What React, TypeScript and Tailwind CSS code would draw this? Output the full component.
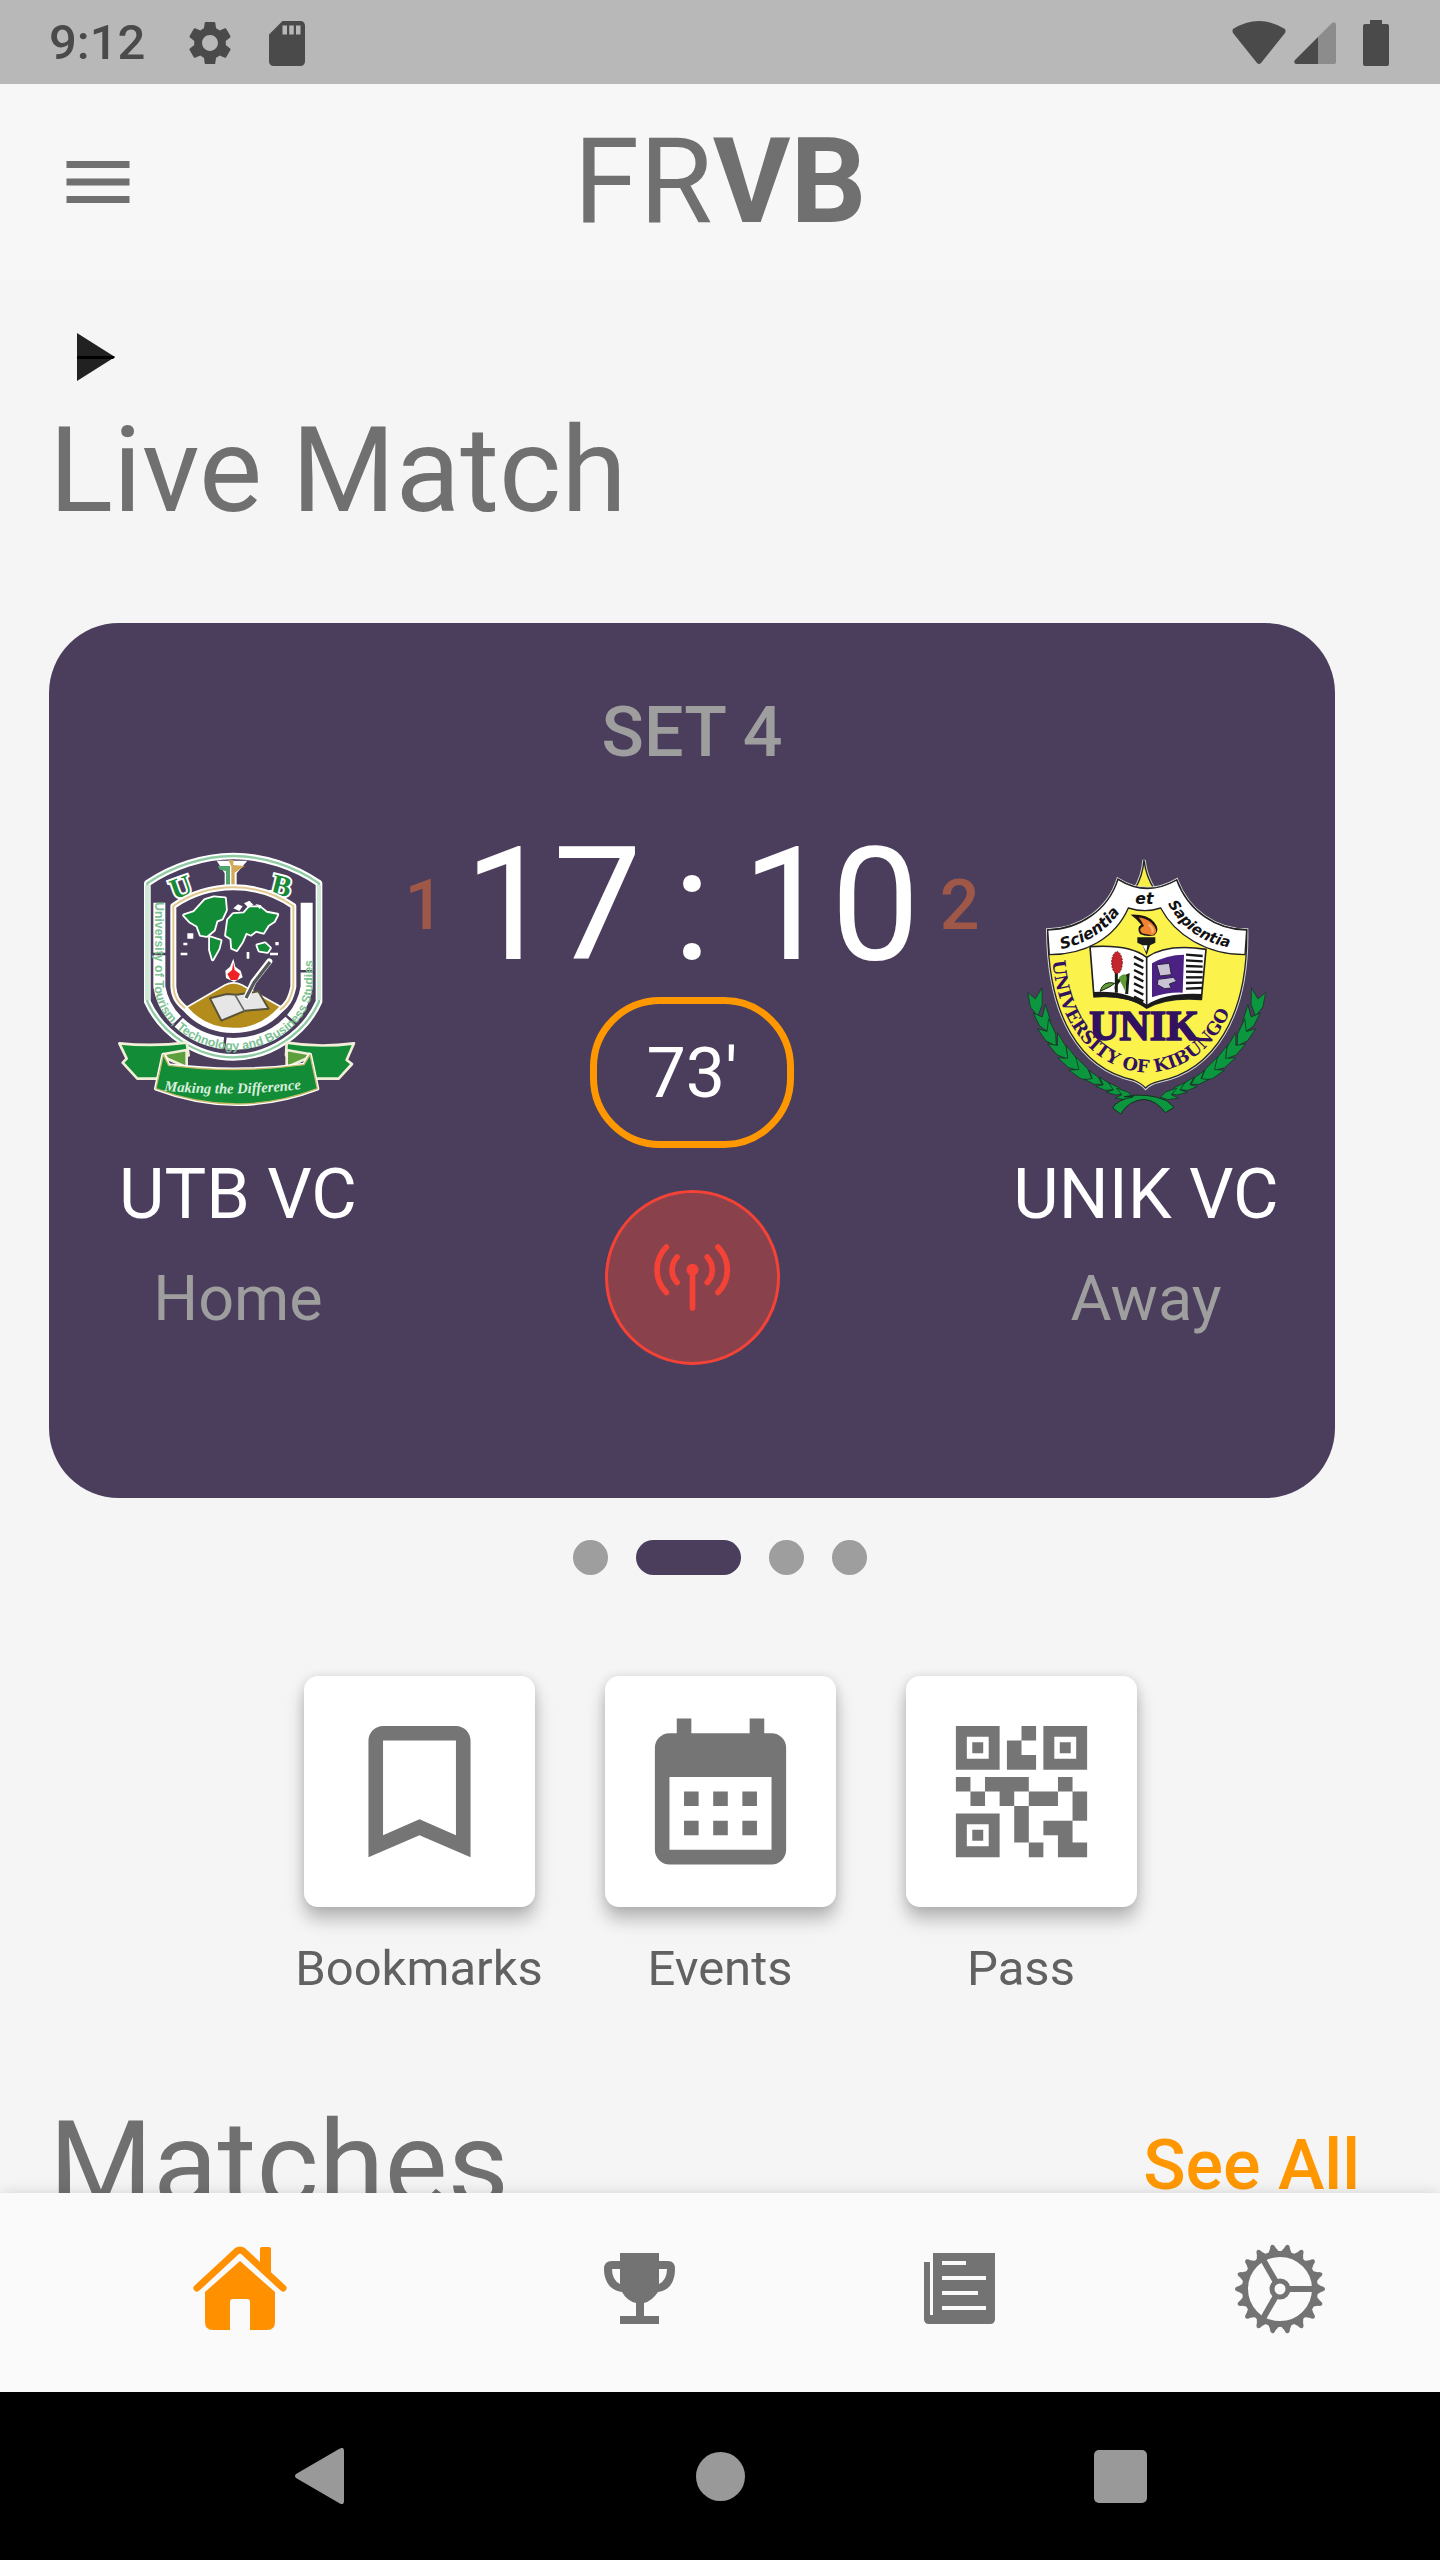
import type { ReactNode } from "react";

function UtbCrest() {
  return (
    <svg viewBox="24 69 840 840" className="size-[280px]" role="img" aria-label="UTB crest">
      <defs>
        <path id="utb-motto" d="M222 812 Q436 832 662 804" />
        <path id="utb-ring" d="M194 246 V500 C198 610 320 688 432 690 C545 688 664 608 668 500 V240" />
      </defs>
      <g fill="none" strokeLinejoin="round">
        <path d="M172 190 C245 140 340 108 430 108 C520 108 615 140 687 190 V545 C645 640 540 712 430 712 C320 712 215 640 172 545 Z" stroke="#ffffff" strokeWidth="20" />
        <path d="M172 190 C245 140 340 108 430 108 C520 108 615 140 687 190 V545 C645 640 540 712 430 712 C320 712 215 640 172 545 Z" stroke="#8fcca4" strokeWidth="7" />
        <path d="M172 195 V540" stroke="#cfe8d8" strokeWidth="14" />
        <path d="M687 195 V540" stroke="#cfe8d8" strokeWidth="12" />
        <path d="M208 248 V500 C225 600 320 670 432 672 C545 670 634 600 650 500 V248" stroke="#ffffff" strokeWidth="36" strokeDasharray="150 8 210 8" />
      </g>
      <text fontFamily="Liberation Sans, sans-serif" fontSize="37" fontWeight="700" fill="#7cc293">
        <textPath href="#utb-ring">University of Tourism, Technology and Business Studies</textPath>
      </text>
      <g fontFamily="Liberation Serif, serif" fontWeight="700" fill="#168a36" stroke="#ffffff" strokeWidth="12" paintOrder="stroke">
        <text x="240" y="232" fontSize="88" transform="rotate(-20 270 200)">U</text>
        <text x="546" y="228" fontSize="88" transform="rotate(14 578 195)">B</text>
      </g>
      <path d="M380 122 H472 L440 160 V200 H404 V160 Z" fill="#ffffff" />
      <path d="M384 138 H420 V195 H408 V154 L388 148 Z" fill="#4ca56c" />
      <path d="M415 120 H430 V135 L464 138 L434 158 V196 H424 V140 Z" fill="#d3a958" />
      <path d="M250 258 C305 220 365 202 430 202 C495 202 555 220 610 258 V500 C602 540 590 555 570 570 C530 615 480 630 430 630 C375 630 325 610 285 565 C262 545 252 530 250 500 Z" fill="none" stroke="#ffffff" strokeWidth="18" strokeLinejoin="round" />
      <path d="M250 258 C305 220 365 202 430 202 C495 202 555 220 610 258 V500 C602 540 590 555 570 570" fill="none" stroke="#e2c88f" strokeWidth="6" />
      <path d="M250 258 V500 C252 530 262 545 285 565" fill="none" stroke="#e2c88f" strokeWidth="6" />
      <g fill="#128c37" stroke="#ffffff" strokeWidth="11" paintOrder="stroke" strokeLinejoin="round">
        <path d="M282 286 L312 276 L345 240 L372 232 L405 235 L408 270 L396 296 L380 302 L372 330 L350 348 L332 345 L322 318 L300 305 Z" />
        <path d="M360 352 L392 362 L386 386 L368 418 L360 390 Z" />
        <path d="M414 300 L430 282 L462 280 L478 262 L510 262 L530 278 L562 284 L552 304 L534 316 L520 338 L498 332 L482 344 L468 338 L456 366 L440 390 L426 384 L424 356 L408 346 Z" />
        <path d="M502 376 L525 370 L540 384 L532 396 L508 392 Z" />
      </g>
      <g fill="#ffffff">
        <path d="M430 265 l14 -12 14 6 -10 14z M462 250 l16 -8 12 12 -14 10z M496 252 l18 4 -4 12z" />
        <path d="M292 340 h18 v16 h-18z M280 368 h12 v8 h-12z M272 398 h20 v8 h-20z M540 398 h24 v8 h-24z M470 396 h8 v20 h-8z M556 366 h10 v10 h-10z" />
      </g>
      <path d="M290 562 L405 495 Q430 482 456 495 L572 560 Q510 628 430 626 Q345 626 290 562 Z" fill="#b48c1c" stroke="#ffffff" strokeWidth="5" />
      <path d="M430 416 L436 440 L452 452 L458 472 L432 486 L408 474 L406 452 L420 440 Z" fill="#ffffff" />
      <path d="M430 428 L434 450 L450 462 L442 480 L422 480 L412 462 L426 450 Z" fill="#ee2424" />
      <path d="M360 535 L410 522 L440 524 L505 514 L536 566 L466 572 L394 602 Z" fill="#e6e6e6" stroke="#585339" strokeWidth="6" strokeLinejoin="round" />
      <path d="M436 526 L464 574" stroke="#666" strokeWidth="5" />
      <path d="M470 530 L490 486 L538 424" fill="none" stroke="#ffffff" strokeWidth="18" strokeLinecap="round" />
      <path d="M468 534 L492 488 L540 426" fill="none" stroke="#55595a" strokeWidth="10" />
      <g strokeLinejoin="round">
        <path d="M88 670 Q190 680 290 668 L296 706 L230 708 L204 776 L142 776 L98 728 L110 716 Z" fill="#128c37" stroke="#f2efd8" strokeWidth="8" />
        <path d="M792 670 Q690 684 590 668 L588 706 L650 708 L676 776 L746 776 L786 732 L770 720 Z" fill="#128c37" stroke="#f2efd8" strokeWidth="8" />
        <path d="M222 702 L290 690 V742 L232 716 Z" fill="#5c9f3c" stroke="#f2efd8" strokeWidth="8" />
        <path d="M658 702 L590 690 V742 L648 716 Z" fill="#5c9f3c" stroke="#f2efd8" strokeWidth="8" />
        <path d="M220 704 L236 736 Q440 762 642 734 L660 704 L682 806 Q440 898 198 806 Z" fill="#128c37" stroke="#ffffff" strokeWidth="12" />
        <path d="M220 704 L236 736 Q440 762 642 734 L660 704 L682 806 Q440 898 198 806 Z" fill="#128c37" stroke="#c9b869" strokeWidth="4" />
      </g>
      <text fontFamily="Liberation Serif, serif" fontSize="44" fontWeight="700" fontStyle="italic" fill="#d9efdf">
        <textPath href="#utb-motto">Making the Difference</textPath>
      </text>
    </svg>
  );
}

const leaves = [
  [112, 520, 82], [136, 572, 66], [152, 614, 58], [184, 655, 52], [216, 692, 45],
  [250, 724, 38], [285, 748, 30], [318, 766, 25], [348, 780, 18], [374, 794, 12],
];

function Laurel() {
  return (
    <g fill="#0c9640" stroke="#12301c" strokeWidth="2">
      {leaves.map(([x, y, a], i) => (
        <path
          key={i}
          d={i < 6 ? "M38 4 L8 22 L-36 24 L-14 4 L-44 -20 L6 -14 Z" : "M26 2 L6 14 L-26 16 L-8 2 L-28 -14 L6 -10 Z"}
          transform={`translate(${x} ${y}) rotate(${a})`}
        />
      ))}
    </g>
  );
}

function UnikCrest() {
  const lines = [0, 1, 2, 3, 4, 5, 6];
  return (
    <svg viewBox="18 39 840 840" className="size-[280px]" role="img" aria-label="UNIK crest">
      <defs>
        <path id="unik-left" d="M184 357 C270 340 342 290 384 206" />
        <path id="unik-right" d="M504 220 C541 295 612 345 712 356" />
        <path id="unik-name" d="M158 392 C172 600 300 722 440 728 C590 722 712 600 728 380" />
      </defs>
      <Laurel />
      <g transform="translate(880 0) scale(-1 1)">
        <Laurel />
      </g>
      <path d="M372 800 Q440 786 500 812 L522 832 L496 848 Q470 812 432 808 Q385 812 362 852 L338 834 Q350 810 400 800 Z" fill="#0c9640" stroke="#12301c" strokeWidth="3" />
      <path d="M432 90 Q438 140 462 176 H405 Q428 140 432 90 Z" fill="#f8ee48" stroke="#cfcfcf" strokeWidth="10" />
      <path d="M432 90 Q438 140 462 176 H405 Q428 140 432 90 Z" fill="#f8ee48" stroke="#222" strokeWidth="4" />
      <path d="M354 148 Q440 202 530 150 C565 245 650 300 740 300 C745 560 640 722 476 754 Q450 760 437 774 Q424 760 400 750 C240 715 145 560 143 300 C240 298 325 240 354 148 Z" fill="#fbf24c" stroke="#d5d5d5" strokeWidth="10" />
      <path d="M354 148 Q440 202 530 150 C565 245 650 300 740 300 C745 560 640 722 476 754 Q450 760 437 774 Q424 760 400 750 C240 715 145 560 143 300 C240 298 325 240 354 148 Z" fill="#fbf24c" stroke="#26262a" strokeWidth="4" />
      <path d="M354 148 Q440 202 530 150 C565 245 650 300 740 300 L735 374 C620 374 525 315 482 234 Q435 250 385 234 C345 325 255 374 148 374 L143 300 C240 298 325 240 354 148 Z" fill="#ffffff" stroke="#222" strokeWidth="4" />
      <g fontFamily="DejaVu Sans, sans-serif" fontStyle="italic" fontWeight="700" fontSize="47" fill="#111">
        <text><textPath href="#unik-left">Scientia</textPath></text>
        <text x="406" y="222">et</text>
        <text fontSize="44"><textPath href="#unik-right">Sapientia</textPath></text>
      </g>
      <path d="M270 350 Q390 342 440 382 Q500 340 618 358 L604 508 Q500 500 440 534 Q380 490 282 500 Z" fill="#ffffff" stroke="#222" strokeWidth="5" />
      <path d="M280 486 Q380 480 440 524 Q500 486 606 492 L604 508 Q500 500 440 534 Q380 496 282 502 Z" fill="#1a1a1a" />
      <path d="M284 480 Q380 474 434 516 V384 Q390 350 276 356 Z M446 516 Q500 480 600 484 L608 364 Q500 350 446 386 Z" fill="#ffffff" />
      <path d="M440 380 V532" stroke="#222" strokeWidth="5" />
      <g stroke="#161616" strokeWidth="7">
        {lines.map((i) => (
          <path key={i} d={`M402 ${380 + i * 20} L430 ${394 + i * 20}`} />
        ))}
        {lines.map((i) => (
          <path key={`r${i}`} d={`M558 ${374 + i * 17} L608 ${378 + i * 16}`} />
        ))}
      </g>
      <path d="M456 400 Q500 374 552 374 L548 488 Q500 486 456 502 Z" fill="#4b2283" />
      <path d="M470 404 L508 400 L514 434 L480 438 Z M474 448 L520 442 L530 454 L508 462 L514 474 L494 476 L472 464 Z" fill="#c9c2d4" stroke="#2c2140" strokeWidth="3" />
      <path d="M349 425 V488 M349 480 Q342 452 384 436 L380 492" fill="none" stroke="#16220f" strokeWidth="9" />
      <path d="M300 484 Q310 450 344 460 L330 470 Z" fill="#5c9b35" stroke="#16220f" strokeWidth="3" />
      <path d="M356 444 Q374 424 380 440 L376 484 Z" fill="#5c9b35" />
      <ellipse cx="351" cy="398" rx="16" ry="33" fill="#c1272d" stroke="#7c1518" strokeWidth="3" strokeDasharray="5 4" />
      <path d="M392 254 Q440 252 462 276 Q482 300 464 316 Q440 322 420 312 Q408 292 424 284 Q410 266 392 254 Z" fill="#1c1510" />
      <path d="M426 310 Q412 296 432 288 Q424 272 416 262 Q450 268 464 290 Q476 310 456 316 Z" fill="#f08232" />
      <path d="M446 284 Q460 292 458 308" fill="none" stroke="#f9b46d" strokeWidth="7" />
      <path d="M412 322 H466 V338 L450 346 L440 376 L428 346 L412 338 Z" fill="#1a1a1a" />
      <path d="M428 346 H442 L439 366 Z" fill="#ffffff" />
      <text x="432" y="630" textAnchor="middle" fontFamily="Liberation Serif, serif" fontWeight="700" fontSize="126" fill="#32115f" stroke="#32115f" strokeWidth="5">UNIK</text>
      <text fontFamily="DejaVu Serif, serif" fontWeight="700" fontSize="53" fill="#32115f">
        <textPath href="#unik-name">UNIVERSITY OF KIBUNGO</textPath>
      </text>
    </svg>
  );
}

function Team({ crest, name, side }: { crest: ReactNode; name: string; side: string }) {
  return (
    <div className="flex w-[280px] flex-col items-center pt-[220px]">
      {crest}
      <h2 className="mt-[30px] whitespace-nowrap text-[70px] leading-[82px] text-white">{name}</h2>
      <p className="mt-[27px] text-[63px] leading-[74px] text-[#9e9e9e]">{side}</p>
    </div>
  );
}

function Shortcut({ label, children }: { label: string; children: ReactNode }) {
  return (
    <button type="button" className="flex w-[301px] flex-col items-center gap-8">
      <span className="flex size-[231px] items-center justify-center rounded-[14px] bg-white shadow-[0_12px_18px_rgba(0,0,0,0.26),0_0_10px_rgba(0,0,0,0.10)]">
        <svg viewBox="0 0 24 24" className="size-[175px]" fill="#757575" aria-hidden="true">
          {children}
        </svg>
      </span>
      <span className="text-[49px] leading-[60px] text-[#616161]">{label}</span>
    </button>
  );
}

const teeth = Array.from({ length: 18 }, (_, i) => i * 20);

export default function App() {
  return (
    <div className="flex h-screen flex-col overflow-hidden bg-[#f5f5f5] font-['Roboto',sans-serif] text-[#707070]">
      <div className="flex h-[84px] shrink-0 items-center justify-between bg-[#b8b8b8] pl-[49px] pr-[51px] pt-[2px] text-[#4a4a4a]">
        <div className="flex items-center">
          <span className="w-[139px] text-[49px] font-medium leading-[60px]">9:12</span>
          <svg viewBox="2 2 20 20" className="h-[46px] w-[44px]" fill="currentColor" aria-hidden="true">
            <path d="M19.14 12.94c.04-.3.06-.61.06-.94 0-.32-.02-.64-.07-.94l2.03-1.58c.18-.14.23-.41.12-.61l-1.92-3.32c-.12-.22-.37-.29-.59-.22l-2.39.96c-.5-.38-1.03-.7-1.62-.94l-.36-2.54c-.04-.24-.24-.41-.48-.41h-3.84c-.24 0-.43.17-.47.41l-.36 2.54c-.59.24-1.13.57-1.62.94l-2.39-.96c-.22-.08-.47 0-.59.22L2.74 8.87c-.12.21-.08.47.12.61l2.03 1.58c-.05.3-.09.63-.09.94s.02.64.07.94l-2.03 1.58c-.18.14-.23.41-.12.61l1.92 3.32c.12.22.37.29.59.22l2.39-.96c.5.38 1.03.7 1.62.94l.36 2.54c.05.24.24.41.48.41h3.84c.24 0 .44-.17.47-.41l.36-2.54c.59-.24 1.13-.56 1.62-.94l2.39.96c.22.08.47 0 .59-.22l1.92-3.32c.12-.22.07-.47-.12-.61l-2.01-1.58zM12 15.6c-1.98 0-3.6-1.62-3.6-3.6s1.62-3.6 3.6-3.6 3.6 1.62 3.6 3.6-1.62 3.6-3.6 3.6z" />
          </svg>
          <svg viewBox="4 2 16 20" className="ml-[37px] h-[45px] w-[36px]" fill="currentColor" aria-hidden="true">
            <path d="M18 2h-8L4.02 8 4 20c0 1.1.9 2 2 2h12c1.1 0 2-.9 2-2V4c0-1.1-.9-2-2-2zm-6 6h-2V4h2v4zm3 0h-2V4h2v4zm3 0h-2V4h2v4z" />
          </svg>
        </div>
        <div className="flex items-center" aria-hidden="true">
          <svg viewBox="0 0 54 44" className="h-[44px] w-[54px]" fill="currentColor">
            <path d="M1 8 Q27 -8 53 8 Q54 10 53 12 L29 42 Q27 44 25 42 L1 12 Q0 10 1 8 Z" />
          </svg>
          <svg viewBox="0 0 42 42" className="ml-[8px] h-[42px] w-[42px]">
            <path d="M24 15 L38 1 Q42 -1 42 3 V40 Q42 42 40 42 H24 Z" fill="#8c8c8c" />
            <path d="M24 15 V42 H2 Q-1 41 1 38 Z" fill="currentColor" />
          </svg>
          <svg viewBox="0 0 26 46" className="ml-[27px] h-[46px] w-[26px]" fill="currentColor">
            <path d="M7 0 H19 V4 H24 Q26 4 26 6 V44 Q26 46 24 46 H2 Q0 46 0 44 V6 Q0 4 2 4 H7 Z" />
          </svg>
        </div>
      </div>

      <header className="grid h-[196px] shrink-0 grid-cols-[1fr_auto_1fr] items-center bg-[#f7f7f7] px-[56px]">
        <button type="button" aria-label="Open menu" className="w-[84px]">
          <svg viewBox="0 0 24 24" className="size-[84px]" fill="#707070">
            <path d="M3 18h18v-2H3v2zm0-5h18v-2H3v2zm0-7v2h18V6H3z" />
          </svg>
        </button>
        <h1 className="text-[119px] leading-[142px]">
          FR<b className="font-bold">VB</b>
        </h1>
      </header>

      <main className="min-h-0 flex-1 overflow-hidden">
        <div className="flex h-[120px] items-center px-[77px] pt-[34px]">
          <svg viewBox="0 0 38 48" className="h-[48px] w-[38px]" aria-hidden="true">
            <path d="M0 0 L38 24 L0 48 Z" fill="#212121" />
            <path d="M0 23 H36 L38 24 L36 26 H0 Z" fill="#000000" />
          </svg>
        </div>
        <h2 className="px-[49px] text-[119px] leading-[142px]">Live Match</h2>

        <section aria-label="Live match score" className="ml-[49px] mr-[105px] mt-[81px] flex h-[875px] justify-between rounded-[70px] bg-[#4a3e5c] px-[49px]">
          <Team crest={<UtbCrest />} name="UTB VC" side="Home" />
          <div className="flex flex-1 flex-col items-center pt-[68px]">
            <p className="text-[70px] font-medium leading-[82px] text-[#9e9e9e]">SET 4</p>
            <div className="mt-[40px] flex items-center gap-[20px] whitespace-nowrap">
              <span className="text-[70px] font-medium leading-[84px] text-[#9f5848]">1</span>
              <div className="flex gap-[31px] text-[158px] leading-[184px] text-white">
                <span>17</span>
                <span>:</span>
                <span>10</span>
              </div>
              <span className="text-[70px] font-medium leading-[84px] text-[#9f5848]">2</span>
            </div>
            <div className="flex h-[151px] w-[204px] items-center justify-center rounded-[70px] border-[7px] border-[#ff9800] text-[70px] leading-[84px] text-white">
              73'
            </div>
            <button type="button" aria-label="Live broadcast" className="mt-[42px] flex size-[175px] items-center justify-center rounded-full border-[3px] border-[#f44336] bg-[#89414b]">
              <svg viewBox="278 778 230 230" className="size-[77px]" fill="none" stroke="#f44336" strokeWidth="17" strokeLinecap="round">
                <path d="M393 870 V984 M437 832 A55.6 55.6 0 0 1 437 908 M347 832 A55.6 55.6 0 0 0 347 908 M469 802 A96.6 96.6 0 0 1 469 938 M315 802 A96.6 96.6 0 0 0 315 938" />
                <circle cx="393" cy="870" r="18" fill="#f44336" stroke="none" />
              </svg>
            </button>
          </div>
          <Team crest={<UnikCrest />} name="UNIK VC" side="Away" />
        </section>

        <div className="mt-[42px] flex justify-center gap-[28px]">
          <button type="button" aria-label="Slide 1" className="size-[35px] rounded-full bg-[#9e9e9e]" />
          <button type="button" aria-label="Slide 2" aria-current="true" className="h-[35px] w-[105px] rounded-full bg-[#4a3e5c]" />
          <button type="button" aria-label="Slide 3" className="size-[35px] rounded-full bg-[#9e9e9e]" />
          <button type="button" aria-label="Slide 4" className="size-[35px] rounded-full bg-[#9e9e9e]" />
        </div>

        <div className="mt-[101px] flex justify-center">
          <Shortcut label="Bookmarks">
            <path d="M17 3H7c-1.1 0-2 .9-2 2v16l7-3 7 3V5c0-1.1-.9-2-2-2zm0 15l-5-2.18L7 18V5h10v13z" />
          </Shortcut>
          <Shortcut label="Events">
            <path fillRule="evenodd" d="M19 4h-1V2h-2v2H8V2H6v2H5a2 2 0 0 0-2 2v14a2 2 0 0 0 2 2h14a2 2 0 0 0 2-2V6a2 2 0 0 0-2-2zM19 20H5V10h14zM7 12h2v2H7zM11 12h2v2h-2zM15 12h2v2h-2zM7 16h2v2H7zM11 16h2v2h-2zM15 16h2v2h-2z" />
          </Shortcut>
          <Shortcut label="Pass">
            <path fillRule="evenodd" d="M3 3h6v6H3zM4.5 4.5v3h3v-3zM15 3h6v6h-6zM16.5 4.5v3h3v-3zM3 15h6v6H3zM4.5 16.5v3h3v-3z" />
            <path d="M5.25 5.25h1.5v1.5h-1.5zM17.25 5.25h1.5v1.5h-1.5zM5.25 17.25h1.5v1.5h-1.5zM12 3h2v2h-2zM10 5h2v2h2v2h-4zM3 10h2v2H3zM7 10h6v2h-2v2H9v-2H7zM17 10h2v2h-2zM5 12h2v2H5zM13 12h4v2h-4zM19 12h2v4h-2zM11 14h2v5h-2zM15 16h4v3h2v2h-4v-3h-2zM13 19h2v2h-2z" />
          </Shortcut>
        </div>

        <div className="mt-[95px] flex items-center justify-between pl-[49px] pr-[80px]">
          <h2 className="text-[119px] leading-[142px]">Matches</h2>
          <a href="#matches" className="text-[70px] font-medium leading-[82px] text-[#ff9800]">See All</a>
        </div>
      </main>

      <nav aria-label="Main" className="relative grid h-[199px] shrink-0 grid-cols-[3fr_2fr_2fr_2fr] bg-[#fafafa] shadow-[0_0_14px_rgba(0,0,0,0.14)]">
        <a href="#home" aria-label="Home" aria-current="page" className="flex items-center justify-center pb-[7px]">
          <svg viewBox="0 0 94 86" className="h-[86px] w-[94px]" fill="#ff9100">
            <path d="M67 3 Q67 1 69 1 H76 Q78 1 78 3 V28 L67 19 Z" />
            <path d="M4 42 L44 5 Q47 3 50 5 L90 42" fill="none" stroke="#ff9100" strokeWidth="7" strokeLinecap="round" strokeLinejoin="round" />
            <path d="M47 15 L82 46 V76 Q82 84 74 84 H57 V56 Q57 53 54 53 H40 Q37 53 37 56 V84 H20 Q12 84 12 76 V46 Z" />
          </svg>
        </a>
        <a href="#competitions" aria-label="Competitions" className="flex items-center justify-center pb-[7px]">
          <svg viewBox="0 0 72 72" className="size-[72px]" fill="#737373">
            <path fillRule="evenodd" d="M16 0 H55 V8 H64 Q71 8 71 16 C71 29 65 38 54 39 Q48 48 40 50 V63 H55 V71 H16 V63 H32 V50 Q23 48 18 39 C7 38 0 29 0 16 Q0 8 8 8 H16 Z M16 16 H8 Q8 27 16 31 Z M55 16 V31 Q63 27 63 16 Z" />
          </svg>
        </a>
        <a href="#news" aria-label="News" className="flex items-center justify-center pb-[7px]">
          <svg viewBox="0 0 72 72" className="size-[72px]" fill="#737373">
            <path fillRule="evenodd" d="M9 0 H71 V66 Q71 71 66 71 H5 Q0 71 0 66 V9 H6 V62 H9 Z M18 8 V12 H42 V8 Z M18 23 V27 H62 V23 Z M18 38 V42 H54 V38 Z M18 53 V57 H62 V53 Z" />
          </svg>
        </a>
        <a href="#settings" aria-label="Settings" className="flex items-center justify-center pb-[7px]">
          <svg viewBox="-45 -45 90 90" className="size-[90px]" fill="#737373">
            {teeth.map((a) => (
              <path key={a} d="M34 -7 Q38 -5 41 -3 Q45 -2 45 0 Q45 2 41 3 Q38 5 34 7 Z" transform={`rotate(${a})`} />
            ))}
            <circle r="35" fill="none" stroke="#737373" strokeWidth="6" />
            <g stroke="#737373" strokeWidth="6">
              <path d="M8 0 H34" />
              <path d="M8 0 H34" transform="rotate(120)" />
              <path d="M8 0 H34" transform="rotate(240)" />
            </g>
            <circle r="8" fill="#fafafa" stroke="#737373" strokeWidth="5" />
          </svg>
        </a>
      </nav>

      <div className="relative grid h-[168px] shrink-0 grid-cols-3 items-center bg-black px-[120px]">
        <button type="button" aria-label="Back" className="flex justify-center">
          <svg viewBox="0 0 50 56" className="h-[56px] w-[50px]" fill="#999999">
            <path d="M1 26 L44 1 Q49 -2 49 3 V53 Q49 58 44 55 L1 30 Q-1 28 1 26 Z" />
          </svg>
        </button>
        <button type="button" aria-label="Home screen" className="flex justify-center">
          <span className="size-[49px] rounded-full bg-[#999999]" />
        </button>
        <button type="button" aria-label="Recent apps" className="flex justify-center">
          <span className="size-[53px] rounded-[5px] bg-[#999999]" />
        </button>
      </div>
    </div>
  );
}
